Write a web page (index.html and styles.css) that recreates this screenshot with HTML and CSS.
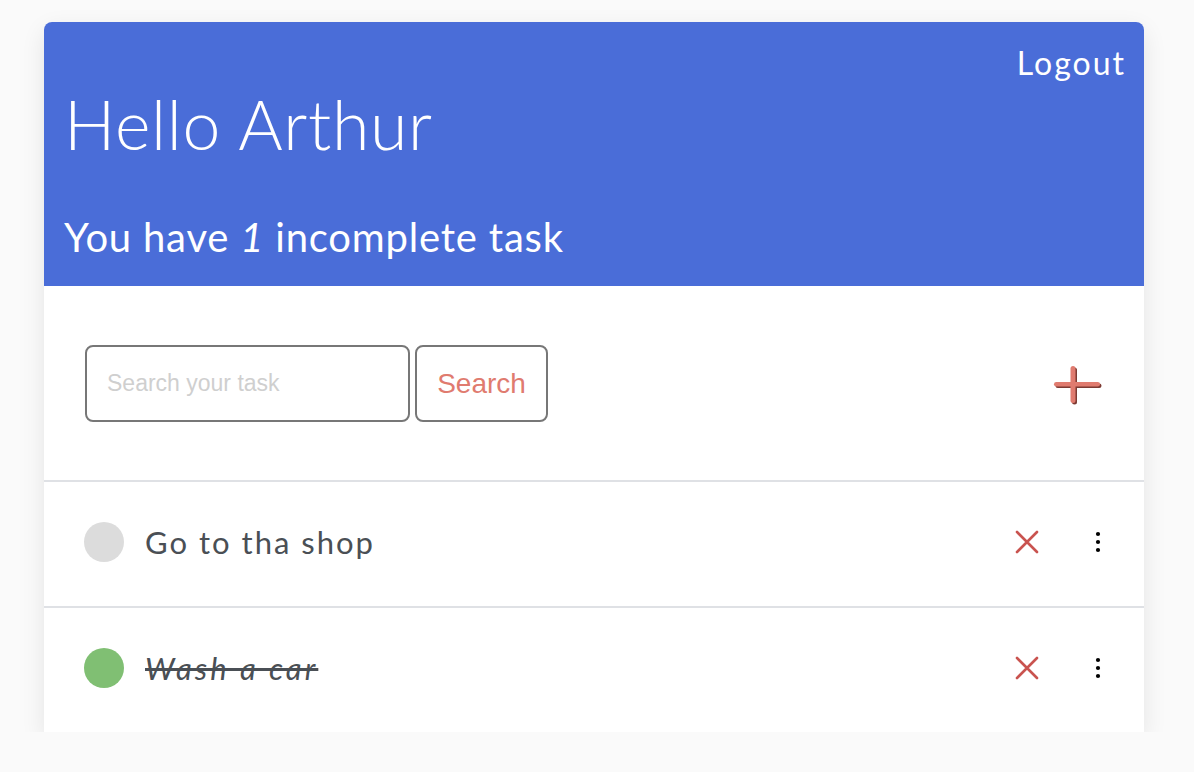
FILE: index.html
```html
<!DOCTYPE html>
<html lang="en">
<head>
<meta charset="utf-8">
<title>Todo</title>
<link rel="stylesheet" href="styles.css">
</head>
<body>
<div class="card">
  <header class="header">
    <div class="header-top"><a class="logout" href="#">Logout</a></div>
    <h1 class="hello">Hello Arthur</h1>
    <p class="summary">You have <em>1</em> incomplete task</p>
  </header>
  <section class="toolbar">
    <form class="search">
      <input class="search-input" type="text" placeholder="Search your task">
      <button class="search-btn" type="button">Search</button>
    </form>
    <button class="add-btn" type="button" aria-label="Add task">
      <svg width="50" height="46" viewBox="0 0 50 46">
        <g fill="#7d3a33">
          <rect x="19" y="2.5" width="5" height="37" rx="2.5"/>
          <rect x="2.5" y="18.5" width="46" height="4.5" rx="2.25"/>
        </g>
        <g fill="#e07b6f">
          <rect x="17.5" y="1" width="5" height="37" rx="2.5"/>
          <rect x="1" y="17" width="46" height="4.5" rx="2.25"/>
        </g>
      </svg>
    </button>
  </section>
  <ul class="tasks">
    <li class="task">
      <span class="check"></span>
      <span class="task-text">Go to tha shop</span>
      <span class="task-actions">
        <svg class="x-icon" width="24" height="24" viewBox="0 0 24 24"><path d="M2 2 L22 22 M22 2 L2 22" stroke="#c9534f" stroke-width="2.6" stroke-linecap="round"/></svg>
        <svg class="dots" width="6" height="22" viewBox="0 0 6 22"><circle cx="3" cy="3" r="2.1"/><circle cx="3" cy="11" r="2.1"/><circle cx="3" cy="19" r="2.1"/></svg>
      </span>
    </li>
    <li class="task done">
      <span class="check"></span>
      <span class="task-text">Wash a car</span>
      <span class="task-actions">
        <svg class="x-icon" width="24" height="24" viewBox="0 0 24 24"><path d="M2 2 L22 22 M22 2 L2 22" stroke="#c9534f" stroke-width="2.6" stroke-linecap="round"/></svg>
        <svg class="dots" width="6" height="22" viewBox="0 0 6 22"><circle cx="3" cy="3" r="2.1"/><circle cx="3" cy="11" r="2.1"/><circle cx="3" cy="19" r="2.1"/></svg>
      </span>
    </li>
  </ul>
</div>
</body>
</html>
```

FILE: styles.css
```css
* { box-sizing: border-box; }
html, body { margin: 0; padding: 0; }
body {
  background: #fafafa;
  font-family: "Lato", "Noto Sans", sans-serif;
  padding: 22px 50px 0 44px;
}
.card {
  width: 1100px;
  background: #fff;
  border-radius: 8px 8px 0 0;
  box-shadow: 0 8px 24px rgba(0,0,0,0.09);
}
.header {
  background: #4a6dd8;
  color: #fff;
  border-radius: 8px 8px 0 0;
  height: 264px;
  padding: 19px 20px 0 20px;
}
.header-top {
  display: flex;
  justify-content: flex-end;
}
.logout {
  color: #fff;
  text-decoration: none;
  font-size: 32px;
  font-weight: 400;
  line-height: 44px;
  letter-spacing: 2px;
  margin-right: -2px;
}
.hello {
  margin: -5px 0 0 0;
  font-size: 68px;
  font-weight: 300;
  line-height: 88px;
  letter-spacing: 0.7px;
}
.summary {
  margin: 45px 0 0 0;
  font-size: 40px;
  line-height: 48px;
  font-weight: 400;
  letter-spacing: 0.8px;
}
.summary em { font-style: italic; }
.toolbar {
  display: flex;
  align-items: center;
  justify-content: space-between;
  padding: 59px 41px 58px 41px;
  border-bottom: 2px solid #dfe1e5;
}
.search {
  display: flex;
  gap: 5px;
  margin: 0;
}
.search-input {
  width: 325px;
  height: 77px;
  border: 2px solid #777;
  border-radius: 8px;
  padding: 0 20px;
  font-family: "Liberation Sans", Arial, sans-serif;
  font-size: 23px;
  color: #333;
  outline: none;
}
.search-input::placeholder { color: #cfcfcf; }
.search-btn {
  width: 133px;
  height: 77px;
  border: 2px solid #777;
  border-radius: 8px;
  background: #fff;
  color: #e07b6f;
  font-family: "Liberation Sans", Arial, sans-serif;
  font-size: 28px;
  padding: 0;
}
.add-btn {
  border: 0;
  background: none;
  padding: 0;
  margin-top: 8px;
  display: flex;
}
.tasks {
  list-style: none;
  margin: 0;
  padding: 0;
}
.task {
  display: flex;
  align-items: center;
  height: 126px;
  padding: 0 43px 4px 40px;
  border-bottom: 2px solid #dfe1e5;
}
.task:last-child {
  border-bottom: 0;
  height: 124px;
}
.check {
  width: 40px;
  height: 40px;
  border-radius: 50%;
  background: #dcdcdc;
  flex: none;
}
.done .check { background: #80bf73; }
.task-text {
  margin-left: 21px;
  font-size: 31px;
  color: #4a4f55;
  letter-spacing: 2px;
  flex: 1;
}
.done .task-text {
  font-style: italic;
  text-decoration: line-through;
  letter-spacing: 3px;
}
.task-actions {
  display: flex;
  align-items: center;
  gap: 56px;
}
.dots { fill: #000; }
```
